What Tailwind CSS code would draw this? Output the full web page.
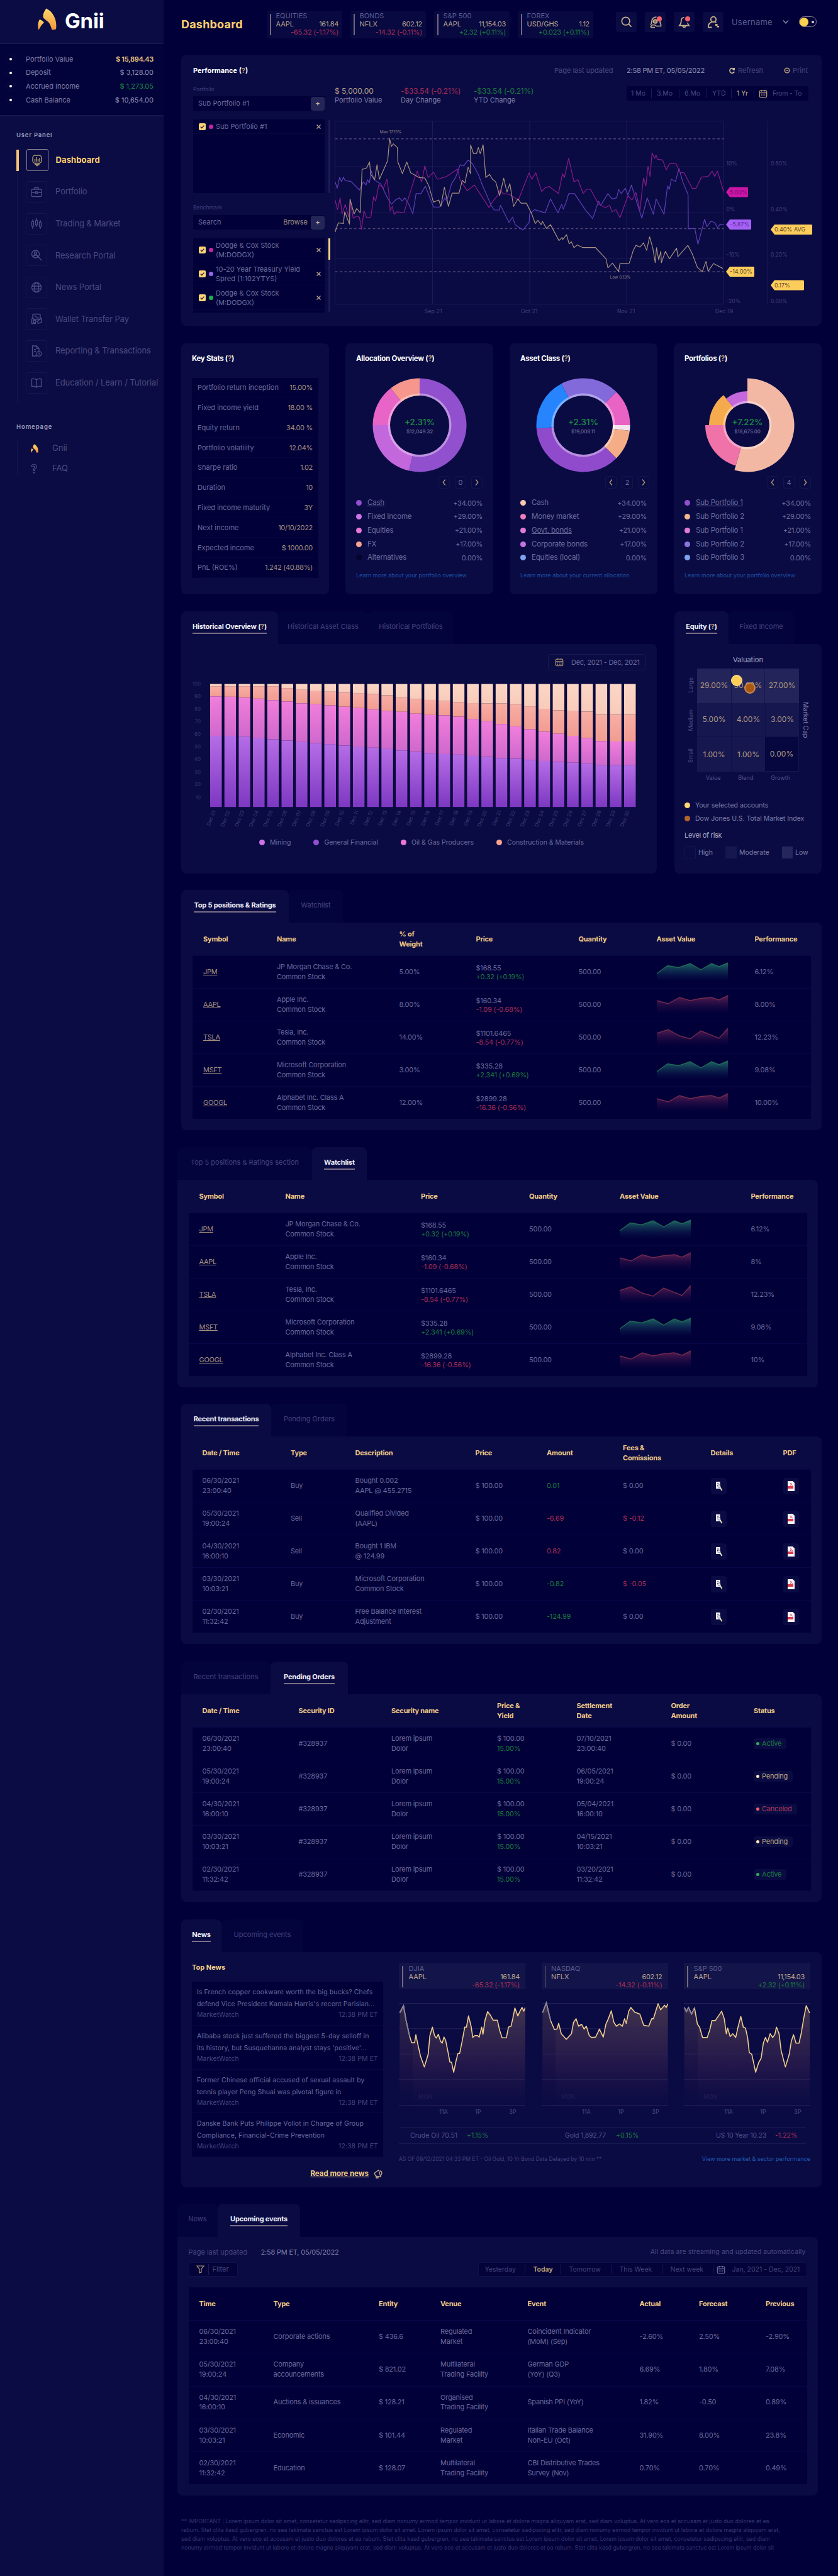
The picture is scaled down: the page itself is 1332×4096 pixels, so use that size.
<!DOCTYPE html>
<html lang="en">
<head>
<meta charset="utf-8">
<title>Gnii Dashboard</title>
<script src="https://cdn.jsdelivr.net/npm/@tailwindcss/browser@4"></script>
</head>
<body class="bg-[#010038] font-[Inter,sans-serif] text-[11px] text-[#7f7fa8]">
<svg class="absolute size-0">
  <defs>
    <linearGradient id="flame" x1="0" y1="0" x2="0" y2="1"><stop offset="0" stop-color="#ffd86b"/><stop offset="1" stop-color="#f0963c"/></linearGradient>
    <linearGradient id="gUp" x1="0" y1="0" x2="0" y2="1"><stop offset="0" stop-color="#1f6a64"/><stop offset="1" stop-color="#0b1a55" stop-opacity="0"/></linearGradient>
    <linearGradient id="gDown" x1="0" y1="0" x2="0" y2="1"><stop offset="0" stop-color="#5c2052"/><stop offset="1" stop-color="#1c0845" stop-opacity="0"/></linearGradient>
    <linearGradient id="gIdx" x1="0" y1="0" x2="0" y2="1"><stop offset="0" stop-color="#46374f" stop-opacity=".95"/><stop offset=".6" stop-color="#27194b" stop-opacity=".85"/><stop offset="1" stop-color="#0e0c45" stop-opacity=".5"/></linearGradient>
  </defs>
  <symbol id="logo" viewBox="0 0 30 34"><path d="M13.500 0C10 5 8 9 8.500 13C9 17 15 19 18 23C20 26 21 29 22.500 34L29 33C31 20 26 6 13.500 0Z" fill="url(#flame)"/><path d="M3 17.500C0 22 0 28 1 34C4 32 4 27 10 22.500C8.500 20 6 18.500 3 17.500Z" fill="url(#flame)"/></symbol>
  <symbol id="cal" viewBox="0 0 16 16"><rect x="1.500" y="2.500" width="13" height="12" rx="2" fill="none" stroke="currentColor" stroke-width="1.500"/><path d="M1.500 6.500h13M5 1v3M11 1v3" stroke="currentColor" stroke-width="1.500"/><path d="M4 9h8M4 11.800h8" stroke="currentColor" stroke-width="1.500" stroke-dasharray="1.600 1.500"/></symbol>
  <symbol id="chevL" viewBox="0 0 8 12"><path d="M5.800 1.500L2.200 6l3.600 4.500" fill="none" stroke="currentColor" stroke-width="1.300"/></symbol>
  <symbol id="chevR" viewBox="0 0 8 12"><path d="M2.200 1.500L5.800 6l-3.600 4.500" fill="none" stroke="currentColor" stroke-width="1.300"/></symbol>
  <symbol id="check" viewBox="0 0 11 11"><rect width="11" height="11" rx="2" fill="#fdd476"/><path d="M2.800 5.600l2 2 3.500-4" fill="none" stroke="#1b1640" stroke-width="1.400"/></symbol>
</svg>
<div class="flex h-[4096px] w-[1332px] overflow-hidden">
  <!-- Sidebar -->
  <aside class="flex w-[260px] shrink-0 flex-col bg-[#0a0c43]">
    <div class="flex h-[70px] items-start border-b-2 border-[#15174f] pl-[60px] pt-[13px]">
      <svg class="h-[35px] w-[30px]"><use href="#logo"/></svg>
      <span class="ml-[13px] mt-[1px] text-[33px] leading-[38px] font-bold tracking-[-0.200px] text-white">Gnii</span>
    </div>
    <div id="balances" class="flex h-[113px] flex-col bg-[#03033b] pt-[13px]"></div>
    <div class="h-[2px] bg-[#16184f]"></div>
    <div class="mt-[23px] pl-[26px] text-[9.500px] leading-[14px] font-semibold tracking-[0.800px] text-[#9b9bbd]">User Panel</div>
    <nav id="nav" class="ml-[27px] mt-[15px] flex flex-col border-l border-[#14164f]"></nav>
    <div class="mt-[30px] pl-[26px] text-[9.500px] leading-[14px] font-semibold tracking-[0.900px] text-[#9b9bbd]">Homepage</div>
    <div class="ml-[27px] mt-[16px] flex h-[54px] flex-col border-l border-[#14164f] text-[13px] text-[#4e4e84]">
      <div class="flex h-[22px] items-center"><svg class="ml-[21px] h-[14px] w-[12px] shrink-0"><use href="#logo"/></svg><span class="ml-[22px]">Gnii</span></div>
      <div class="mt-[10px] flex h-[22px] items-center"><svg class="ml-[20px] h-[16px] w-[12px]" viewBox="0 0 12 16" fill="none" stroke="#4e4e84" stroke-width="1.200"><path d="M2 5a4 4 0 1 1 6 3.500c-1 .7-1 1.500-1 3H5c0-2.500 0-3.500 1.500-4.500A1.600 1.600 0 1 0 4.200 5zM5 13.500h2v1.500H5z"/></svg><span class="ml-[23px]">FAQ</span></div>
    </div>
  </aside>

  <!-- Content -->
  <main class="flex min-w-0 flex-1 flex-col pl-[28px]">
    <header class="flex h-[87px] w-[1018px] shrink-0 items-start">
      <h1 class="mt-[26px] w-[136px] text-[18px] leading-[26px] font-bold tracking-[0.200px] text-[#ffcf70]">Dashboard</h1>
      <div id="tickers" class="mt-[17px] flex gap-[13px]"></div>
      <div class="ml-[36px] mt-[19px] flex gap-[13px] text-[#c9b08c]">
        <div class="flex h-[32px] w-[33px] items-center justify-center rounded bg-[#0a0b42]"><svg class="size-[18px]" viewBox="0 0 20 20" fill="none" stroke="currentColor" stroke-width="1.900"><circle cx="8.500" cy="8.500" r="7"/><path d="M13.500 13.500L18.500 18.500"/></svg></div>
        <div class="relative flex h-[32px] w-[33px] items-center justify-center rounded bg-[#0a0b42]"><svg class="size-[20px]" viewBox="0 0 20 20" fill="none" stroke="currentColor" stroke-width="1.700"><path d="M11.500 2C6.500 2 4 5.500 4 9c0 2.500-.5 4-2 5.500M17 8.500c0 3 .2 4 1.500 5.500v2.500H11"/><circle cx="9.500" cy="9" r="3" fill="#8a7860"/><path d="M2 18.500c1-3 3-4 5-4 2 0 3 .5 4 2M3 18.500h6"/></svg><span class="absolute right-[6px] top-[7px] size-[8px] rounded-full bg-[#f5606e]"></span></div>
        <div class="relative flex h-[32px] w-[33px] items-center justify-center rounded bg-[#0a0b42]"><svg class="size-[19px]" viewBox="0 0 20 20" fill="none" stroke="currentColor" stroke-width="1.800"><path d="M10 2C6.500 2 5 5 5 8c0 3.500-1 5.500-3 7.500h16c-1.500-1.500-2-2.500-2.300-5M7.500 16c.5 3 4.500 3 5 0"/></svg><span class="absolute right-[7px] top-[7px] size-[8px] rounded-full bg-[#f5606e]"></span></div>
        <div class="flex h-[32px] w-[33px] items-center justify-center rounded bg-[#0a0b42]"><svg class="size-[20px]" viewBox="0 0 20 20" fill="none" stroke="currentColor" stroke-width="1.800"><circle cx="10" cy="5.800" r="4.200"/><path d="M7.500 9.800C4 11 1.500 14 2 18.500h5.500M12.500 9.800l2 1"/><path d="M13 13h3.500v3H19v2.500h-3.500V16H13z" fill="currentColor" stroke="none"/></svg></div>
      </div>
      <span class="ml-[13px] mt-[26px] text-[13px] leading-[18px] tracking-[0.200px] text-[#5d5d91]">Username</span>
      <svg class="ml-[16px] mt-[31px] h-[8px] w-[10px] text-[#8a8ab0]" viewBox="0 0 10 8"><path d="M1 1.500l4 4.500 4-4.500" fill="none" stroke="currentColor" stroke-width="1.400"/></svg>
      <div class="ml-[16px] mt-[26px] flex h-[17px] w-[28px] items-center rounded-full border border-[#8d8092]"><span class="size-[14px] rounded-full bg-[#fdd04e]"></span><span class="ml-[5px] size-[4px] rounded-full bg-[#d9d3da]"></span></div>
    </header>

    <!-- Performance -->
    <section class="flex h-[431px] w-[1018px] shrink-0 flex-col rounded-lg bg-[#0a0b43] px-[19px] pt-[16px]">
      <div class="flex h-[18px] items-center">
        <h2 class="w-[574px] font-bold text-white">Performance <span>(<span class="text-[#b39f7c]">?</span>)</span></h2>
        <span class="w-[115px] text-[#4b4b80]">Page last updated</span>
        <span class="w-[162px] tracking-[-0.200px] text-[#8f8fb4]">2:58 PM ET, 05/05/2022</span>
        <svg class="size-[11px] text-[#d8c39b]" viewBox="0 0 12 12"><path d="M9.800 3.500A4.200 4.200 0 1 0 10.200 7.500M10 1v3H7" fill="none" stroke="currentColor" stroke-width="1.700"/></svg>
        <span class="ml-[4px] w-[73px] text-[#46467b]">Refresh</span>
        <svg class="size-[10px] text-[#b39b77]" viewBox="0 0 12 12"><circle cx="6" cy="6" r="4.500" fill="none" stroke="currentColor" stroke-width="2"/><path d="M4 6h4" stroke="currentColor" stroke-width="2"/></svg>
        <span class="ml-[4px] text-[#46467b]">Print</span>
      </div>
      <div class="flex pt-[15px]">
        <div class="flex w-[225px] shrink-0 flex-col">
          <div class="h-[17px] text-[8.500px] leading-[12px] text-[#40407a]">Portfolio</div>
          <div class="flex h-[23px] w-[209px] items-center bg-[#010038] pl-[8px] text-[#6b6b9d]"><span class="flex-1">Sub Portfolio #1</span><span class="flex h-[22px] w-[22px] items-center justify-center rounded-sm bg-[#242658] font-bold text-[#c5b79c]">+</span></div>
          <div class="mt-[14px] flex">
            <div class="h-[117px] w-[209px] bg-[#010038]"><div class="flex h-[23px] items-center border-b border-[#07083f] pl-[9px] text-[#6b6b9d]"><svg class="size-[11px]"><use href="#check"/></svg><span class="ml-[5px] mr-[4px] size-[7px] rounded-full bg-[#c226a8]"></span><span class="w-[160px]">Sub Portfolio #1</span><svg class="size-[7px]" viewBox="0 0 7 7" stroke="#c5b79c" stroke-width="1.100"><path d="M.5.5l6 6M6.500.5l-6 6"/></svg></div></div>
            <span class="ml-[6px] h-[117px] w-[3px] rounded-full bg-[#1b1d57]"></span>
          </div>
          <div class="mt-[17px] h-[18px] text-[8.500px] leading-[12px] text-[#40407a]">Benchmark</div>
          <div class="flex h-[23px] w-[209px] items-center bg-[#010038] pl-[8px] text-[#6b6b9d]"><span class="flex-1">Search</span><span class="mr-[5px] text-[#a38f80]">Browse</span><span class="flex h-[22px] w-[22px] items-center justify-center rounded-sm bg-[#242658] font-bold text-[#c5b79c]">+</span></div>
          <div class="mt-[14px] flex">
            <div id="bench" class="h-[118px] w-[209px] bg-[#010038]"></div>
            <span class="ml-[6px] h-[117px] w-[3px] rounded-full bg-[#1b1d57]"><span class="block h-[34px] w-[3px] bg-[#f6d48a]"></span></span>
          </div>
        </div>
        <div class="flex w-[768px] shrink-0 flex-col">
          <div class="flex h-[50px]">
            <div class="w-[105px] shrink-0 pt-[1px]"><div class="text-[12px] leading-[15px] text-[#b7a48e]">$ 5,000.00</div><div class="leading-[14px]">Portfolio Value</div></div>
            <div class="w-[116px] shrink-0 pt-[1px]"><div class="text-[12px] leading-[15px] tracking-[-0.200px] text-[#a92c55]">-$33.54 (-0.21%)</div><div class="leading-[14px]">Day Change</div></div>
            <div class="w-[243px] shrink-0 pt-[1px]"><div class="text-[12px] leading-[15px] tracking-[-0.200px] text-[#1b7a3e]">-$33.54 (-0.21%)</div><div class="leading-[14px]">YTD Change</div></div>
            <div class="mt-[1px] flex h-[23px] w-[289px] shrink-0 items-center rounded bg-[#010038] text-[10.500px] text-[#4a4a80]">
              <span class="w-[39px] shrink-0 pl-[7px]">1 Mo</span><span class="w-[44px] shrink-0 border-l border-[#191b55] pl-[8px]">3.Mo</span><span class="w-[44px] shrink-0 border-l border-[#191b55] pl-[8px]">6.Mo</span><span class="w-[39px] shrink-0 border-l border-[#191b55] pl-[8px]">YTD</span><span class="w-[36px] shrink-0 border-l border-[#191b55] pl-[8px] text-[#c5b08b]">1 Yr</span><span class="flex items-center whitespace-nowrap border-l border-[#191b55] pl-[7px]"><svg class="size-[14px] text-[#b09b78]"><use href="#cal"/></svg><span class="ml-[8px] tracking-[-0.200px]">From - To</span></span>
            </div>
          </div>
          <svg id="perf" class="h-[320px] w-[768px]" viewBox="532 186 768 320"></svg>
        </div>
      </div>
    </section>

    <!-- Statistic cards -->
    <div class="mt-[28px] flex h-[399px] w-[1018px] shrink-0 gap-[26px]">
      <section class="flex-1 rounded-lg bg-[#0a0b43] px-[17px] pt-[15px]">
        <h2 class="text-[11.500px] leading-[18px] font-bold tracking-[-0.300px] text-white">Key Stats (<span class="text-[#b39f7c]">?</span>)</h2>
        <div id="stats" class="mt-[22px] bg-[#010038] px-[9px]"></div>
      </section>
      <section class="flex-1 rounded-lg bg-[#0a0b43] px-[17px] pt-[15px]" data-donut="0"></section>
      <section class="flex-1 rounded-lg bg-[#0a0b43] px-[17px] pt-[15px]" data-donut="1"></section>
      <section class="flex-1 rounded-lg bg-[#0a0b43] px-[17px] pt-[15px]" data-donut="2"></section>
    </div>

    <!-- History and equity -->
    <div class="mt-[27px] flex h-[417px] w-[1018px] shrink-0 gap-[28px]">
      <section class="flex w-[756px] flex-col">
        <div class="flex h-[52px]" data-tabs="Historical Overview (?)*|154;Historical Asset Class|143;Historical Portfolios|136"></div>
        <div class="flex flex-1 flex-col rounded-lg rounded-tl-none bg-[#0a0b43]">
          <div class="ml-auto mr-[18px] mt-[16px] flex h-[26px] w-[155px] items-center rounded border border-[#181a54] pl-[10px]"><svg class="size-[14px] text-[#a08c6c]"><use href="#cal"/></svg><span class="ml-[12px] whitespace-nowrap tracking-[-0.300px] text-[#6b6b9d]">Dec, 2021 - Dec, 2021</span></div>
          <svg id="hist" class="mt-[10px] h-[256px] w-[740px]" viewBox="288 1076 740 256"></svg>
          <div class="flex justify-center gap-[36px] pl-[8px] text-[10.500px] text-[#6b6b9d]">
            <span class="flex items-center gap-[8px]"><i class="size-[9px] rounded-full bg-[#cb74e6]"></i>Mining</span>
            <span class="flex items-center gap-[8px]"><i class="size-[9px] rounded-full bg-[#9250cf]"></i>General Financial</span>
            <span class="flex items-center gap-[8px]"><i class="size-[9px] rounded-full bg-[#ea77d6]"></i>Oil &amp; Gas Producers</span>
            <span class="flex items-center gap-[8px]"><i class="size-[9px] rounded-full bg-[#f8a392]"></i>Construction &amp; Materials</span>
          </div>
        </div>
      </section>
      <section class="flex w-[234px] flex-col">
        <div class="flex h-[52px]" data-tabs="Equity (?)*|86;Fixed Income|104"></div>
        <div class="flex flex-1 flex-col rounded-lg rounded-tl-none bg-[#0a0b43] px-[16px]">
          <div class="mt-[16px] h-[23px] text-center text-[11px] leading-[18px] text-[#a9a9c6]">Valuation</div>
          <div class="flex h-[164px]">
            <div class="flex w-[20px] flex-col justify-around text-center text-[9px] text-[#4e4e84]"><span class="flex rotate-180 items-center justify-center [writing-mode:vertical-rl]">Large</span><span class="flex rotate-180 items-center justify-center [writing-mode:vertical-rl]">Medium</span><span class="flex rotate-180 items-center justify-center [writing-mode:vertical-rl]">Small</span></div>
            <div class="relative grid h-[164px] w-[162px] grid-cols-3 grid-rows-3 text-[12px] text-[#b09a80]">
              <span class="flex items-center justify-center bg-[#232459]">29.00%</span><span class="flex items-center justify-center border-x border-[#17174d] bg-[#232459]">30.00%</span><span class="flex items-center justify-center bg-[#232459]">27.00%</span>
              <span class="flex items-center justify-center border-b border-[#10114a] bg-[#16174f]">5.00%</span><span class="flex items-center justify-center border-b border-l border-[#10114a] bg-[#16174f]">4.00%</span><span class="flex items-center justify-center border-b border-l border-[#10114a] bg-[#16174f]">3.00%</span>
              <span class="flex items-center justify-center bg-[#16174f]">1.00%</span><span class="flex items-center justify-center border-l border-[#10114a] bg-[#16174f]">1.00%</span><span class="flex items-center justify-center border-r border-b border-[#16174f] bg-[#07073f]">0.00%</span>
              <i class="absolute left-[54px] top-[10px] size-[18px] rounded-full border border-[#fde3a0] bg-[#fdce58]"></i>
              <i class="absolute left-[75px] top-[22px] size-[18px] rounded-full border-2 border-[#c9885a] bg-[#a9590f]"></i>
            </div>
            <div class="flex w-[20px] items-center justify-center text-[10.500px] text-[#8080aa] [writing-mode:vertical-rl]">Market Cap</div>
          </div>
          <div class="ml-[20px] mt-[3px] flex w-[162px] justify-around text-[9px] leading-[13px] text-[#52528a]"><span>Value</span><span>Blend</span><span>Growth</span></div>
          <div class="mt-[27px] flex h-[21px] items-center text-[10.500px]"><i class="mr-[8px] size-[9px] shrink-0 rounded-full bg-[#fdd676]"></i>Your selected accounts</div>
          <div class="flex h-[21px] items-center whitespace-nowrap text-[10.500px]"><i class="mr-[8px] size-[9px] shrink-0 rounded-full bg-[#b0652c]"></i>Dow Jones U.S. Total Market Index</div>
          <div class="mt-[8px] text-[11px] leading-[16px] tracking-[-0.300px] text-[#a9a9c6]">Level of risk</div>
          <div class="mt-[10px] flex items-center text-[10.500px]"><i class="mr-[4px] h-[19px] w-[18px] border border-[#14164f]"></i><span class="w-[43px]">High</span><i class="mr-[4px] h-[19px] w-[18px] bg-[#16174f]"></i><span class="w-[68px]">Moderate</span><i class="mr-[4px] h-[19px] w-[17px] bg-[#25265b]"></i><span>Low</span></div>
        </div>
      </section>
    </div>

    <section class="mt-[26px] h-[382px] w-[1018px] shrink-0" data-table="positions"></section>
    <section class="-ml-[6px] mt-[27px] h-[382px] w-[1018px] shrink-0" data-table="watchlist"></section>
    <section class="mt-[26px] h-[383px] w-[1018px] shrink-0" data-table="recent"></section>
    <section class="mt-[27px] h-[383px] w-[1018px] shrink-0" data-table="pending"></section>

    <!-- News -->
    <section class="mt-[27px] flex h-[426px] w-[1018px] shrink-0 flex-col">
      <div class="flex h-[52px]" data-tabs="News*|64;Upcoming events|130"></div>
      <div class="flex flex-1 rounded-lg rounded-tl-none bg-[#0a0b43] pl-[17px]">
        <div class="flex w-[304px] shrink-0 flex-col">
          <h3 class="mt-[15px] h-[32px] text-[11px] leading-[18px] font-bold text-[#f4cd86]">Top News</h3>
          <div id="news" class="h-[279px] bg-[#010038]"></div>
          <div class="mt-[18px] flex items-center justify-end"><span class="text-[11.500px] font-bold text-[#f4cd86] underline">Read more news</span><svg class="ml-[7px] h-[15px] w-[16px] text-[#c9b08c]" viewBox="0 0 16 15" fill="none" stroke="currentColor" stroke-width="1.300"><path d="M2 6.500l7-5 3 11-8-1.500zM5 11v3h3v-2.500M11 3c3 0 4 5 1.500 7"/></svg></div>
        </div>
        <div class="ml-[25px] flex w-[654px] shrink-0 flex-col">
          <div id="indices" class="mt-[17px] flex justify-between"></div>
          <div class="mt-[14px] flex h-[27px] w-[647px] items-center border-y border-[#171953] text-[10.500px] text-[#52528a]"><span class="ml-[18px] w-[90px]">Crude Oil 70.51</span><span class="w-[156px] text-[#1b7a3e]">+1.15%</span><span class="w-[81px] tracking-[-0.200px]">Gold 1,892.77</span><span class="w-[159px] text-[#1b7a3e]">+0.15%</span><span class="w-[94px] tracking-[-0.200px]">US 10 Year 10.23</span><span class="text-[#a92c55]">-1.22%</span></div>
          <div class="mt-[17px] flex justify-between text-[8.500px] leading-[14px]"><span class="text-[#40407a]">AS OF 09/12/2021 04:33 PM ET - Oil Gold, 10 Yr Bond Data Delayed by 10 min **</span><span class="text-[9px] text-[#1f5cb8]">View more market &amp; sector performance</span></div>
        </div>
      </div>
    </section>

    <!-- Upcoming events -->
    <section class="-ml-[6px] mt-[26px] h-[464px] w-[1018px] shrink-0">
      <div class="flex h-[53px]" data-tabs="News|64;Upcoming events*|131"></div>
      <div class="h-[411px] rounded-lg rounded-tl-none bg-[#0a0b43] px-[17.500px]">
        <div class="flex h-[40px] items-center pt-[8px]"><span class="w-[115px] text-[#45457c]">Page last updated</span><span class="tracking-[-0.200px] text-[#7f7fa8]">2:58 PM ET, 05/05/2022</span><span class="ml-auto mr-[2px] text-[10.500px] tracking-[0.100px] text-[#4a4a80]">All data are streaming and updated automatically</span></div>
        <div class="flex h-[40px] items-start justify-between text-[#45457c]">
          <div class="flex h-[23px] w-[78px] items-center rounded border border-[#10114a] bg-[#030339] pl-[11px]"><svg class="h-[13px] w-[13px] text-[#b39b77]" viewBox="0 0 13 13"><path d="M1 1h11L8 6v5l-3 1V6z" fill="none" stroke="currentColor" stroke-width="1.200"/></svg><span class="ml-[6px] border-l border-[#191b55] pl-[6px]">Filter</span></div>
          <div class="flex h-[23px] w-[523px] items-center rounded border border-[#10114a] bg-[#030339] text-[10.500px]"><span class="w-[73px] pl-[10px]">Yesterday</span><span class="w-[57px] border-l border-[#191b55] pl-[13px] font-semibold text-[#c5a878]">Today</span><span class="w-[80px] border-l border-[#191b55] pl-[13px]">Tomorrow</span><span class="w-[81px] border-l border-[#191b55] pl-[13px]">This Week</span><span class="w-[81px] border-l border-[#191b55] pl-[13px]">Next week</span><span class="flex items-center whitespace-nowrap border-l border-[#191b55] pl-[5px]"><svg class="size-[14px] text-[#67679a]"><use href="#cal"/></svg><span class="ml-[11px]">Jan, 2021 - Dec, 2021</span></span></div>
        </div>
        <div id="events" class="bg-[#010038]"></div>
      </div>
    </section>

    <p class="mt-[34px] w-[1018px] text-[8.800px] leading-[14px] whitespace-nowrap text-[#36366f]">** IMPORTANT : Lorem ipsum dolor sit amet, consetetur sadipscing elitr, sed diam nonumy eirmod tempor invidunt ut labore et dolore magna aliquyam erat, sed diam voluptua. At vero eos et accusam et justo duo dolores et ea<br>rebum. Stet clita kasd gubergren, no sea takimata sanctus est Lorem ipsum dolor sit amet. Lorem ipsum dolor sit amet, consetetur sadipscing elitr, sed diam nonumy eirmod tempor invidunt ut labore et dolore magna aliquyam erat,<br>sed diam voluptua. At vero eos et accusam et justo duo dolores et ea rebum. Stet clita kasd gubergren, no sea takimata sanctus est Lorem ipsum dolor sit amet. Lorem ipsum dolor sit amet, consetetur sadipscing elitr, sed diam<br>nonumy eirmod tempor invidunt ut labore et dolore magna aliquyam erat, sed diam voluptua. At vero eos et accusam et justo duo dolores et ea rebum. Stet clita kasd gubergren, no sea takimata sanctus est Lorem ipsum dolor sit</p>
  </main>
</div>

<script>
const $ = s => document.querySelector(s);
const RED = 'text-[#a92c55]', GREEN = 'text-[#1b7a3e]';

// Sidebar balances
$('#balances').innerHTML = [
  ['Portfolio Value','$ 15,894.43','font-semibold tracking-[-0.300px] text-[#e5c07e]'],
  ['Deposit','$ 3,128.00','text-[#8f8fb4]'],
  ['Accrued Income','$ 1,273.05','text-[#1b8a3e]'],
  ['Cash Balance','$ 10,654.00','text-[#8f8fb4]'],
].map(([l,v,c]) => `<div class="flex h-[21.700px] items-center pr-[16px] pl-[10px]"><span class="flex size-[14px] items-center justify-center rounded-full border border-[#0a0b42]"><i class="size-[4px] rounded-full bg-white"></i></span><span class="ml-[17px] flex-1">${l}</span><span class="${c}">${v}</span></div>`).join('');

// Sidebar navigation
const navIcons = [
  '<rect x="3" y="2" width="14" height="12.500" rx="4"/><path d="M6.500 12V8M9 12V5M11.500 12V8M14 12V6M7 14.500v2h6v-2M8 18.500h4"/>',
  '<rect x="2" y="6" width="16" height="11.500" rx="1.500"/><path d="M7 6V3.500h6V6M2 11h6M12 11h6M8.500 9.800h3v2.500h-3z"/>',
  '<path d="M4 3v3M4 14v4M10 1v3M10 12v3M16 4v3M16 15v3"/><rect x="2.500" y="6" width="3" height="8" rx="1"/><rect x="8.500" y="4" width="3" height="8" rx="1"/><rect x="14.500" y="7" width="3" height="8" rx="1"/>',
  '<circle cx="8.500" cy="8" r="6"/><circle cx="8.500" cy="6.500" r="2"/><path d="M5 12c.5-3 6.500-3 7 0M13 12.500l5 5.500"/>',
  '<circle cx="10" cy="10" r="7.500"/><ellipse cx="10" cy="10" rx="3.500" ry="7.500"/><path d="M2.500 8h15M2.500 12.500h15"/>',
  '<rect x="4" y="2.500" width="12" height="8" rx="1"/><path d="M2 8l4 3M6 5l8 4M2.500 10v7.500H9M18 9l-7 5 2 3.500 5-2.500z"/><circle cx="7" cy="14" r="2"/>',
  '<path d="M11 18H3.500V2H10l4 4v4M10 2v4h4M6 8h3M6 11h3"/><circle cx="14" cy="14.500" r="3.800"/><path d="M14 12.500v2.300h1.500"/>',
  '<path d="M10 5C8 3 5 3 2.500 3.500v12C5 15 8 15 10 17c2-2 5-2 7.500-1.500v-12C15 3 12 3 10 5zv12"/>'];
$('#nav').innerHTML = ['Dashboard','Portfolio','Trading &amp; Market','Research Portal','News Portal','Wallet Transfer Pay','Reporting &amp; Transactions','Education / Learn / Tutorial']
  .map((t,i) => i === 0
    ? `<div class="-ml-[2px] mb-[15.600px] flex h-[35px] items-center"><i class="h-[34px] w-[3.500px] bg-[#f3c274]"></i><span class="ml-[12px] flex h-[35px] w-[35px] items-center justify-center rounded-[3px] border-[1.500px] border-[#8f8794]"><svg class="size-[20px]" viewBox="0 0 20 20" fill="none" stroke="#a8946f" stroke-width="1.500">${navIcons[0]}</svg></span><span class="ml-[12px] text-[13px] font-bold tracking-[0.100px] text-[#ffcf70]">${t}</span></div>`
    : `<div class="mb-[15.600px] ml-[13px] flex h-[35px] items-center"><span class="flex h-[34px] w-[34px] shrink-0 items-center justify-center rounded-[3px] border border-[#14164f]"><svg class="size-[20px]" viewBox="0 0 20 20" fill="none" stroke="#4e4e84" stroke-width="1.300">${navIcons[i]}</svg></span><span class="ml-[13px] whitespace-nowrap text-[13px] tracking-[-0.100px] text-[#4a4a80]">${t}</span></div>`).join('');

// Quote cards
const quote = (a,b,c,d,up) => `<div class="flex-1"><div class="leading-[13px] text-[#5d5d91]">${a}</div><div class="flex justify-between leading-[13px] text-[#b7a48e]"><span>${b}</span><span class="tracking-[-0.300px]">${c}</span></div><div class="text-right leading-[13px] tracking-[-0.200px] ${up ? GREEN : RED}">${d}</div></div>`;
$('#tickers').innerHTML = [
  ['EQUITIES','AAPL','161.84','-65.32 (-1.17%)',0],['BONDS','NFLX','602.12','-14.32 (-0.11%)',0],
  ['S&amp;P 500','AAPL','11,154.03','+2.32 (+0.11%)',1],['FOREX','USD/GHS','1.12','+0.023 (+0.11%)',1],
].map(q => `<div class="flex h-[44px] w-[120px] rounded bg-[#080941] pt-[2px] pr-[6px] pl-[5px]"><i class="mt-[3px] mr-[8px] h-[34px] w-[1.500px] bg-[#75697d]"></i>${quote(...q)}</div>`).join('');

// Benchmarks
$('#bench').innerHTML = [['Dodge &amp; Cox Stock','(M:DODGX)','bg-[#c226a8]'],['10-20 Year Treasury Yield','Spred (1:102YTYS)','bg-[#9a63f0]'],['Dodge &amp; Cox Stock','(M:DODGX)','bg-[#22b04e]']]
  .map(([a,b,c]) => `<div class="flex h-[38px] items-center border-b border-[#07083f] pl-[9px] text-[#6b6b9d]"><svg class="size-[11px]"><use href="#check"/></svg><span class="ml-[5px] mr-[4px] size-[7px] rounded-full ${c}"></span><span class="w-[160px] leading-[14.500px]">${a}<br>${b}</span><svg class="size-[7px]" viewBox="0 0 7 7" stroke="#c5b79c" stroke-width="1.100"><path d="M.5.5l6 6M6.500.5l-6 6"/></svg></div>`).join('');

// Performance chart
(() => {
  const gold = "1254,1085 1266,1042 1285,1045 1290,990 1308,1048 1310,930 1325,1000 1335,975 1348,995 1355,792 1372,785 1383,757 1387,815 1402,840 1411,770 1420,838 1451,750 1458,648 1465,685 1472,672 1487,690 1489,757 1506,812 1522,757 1537,808 1568,830 1590,832 1605,870 1622,945 1642,935 1650,965 1663,875 1678,965 1692,903 1718,903 1730,843 1740,855 1752,782 1761,812 1761,677 1772,718 1783,718 1790,690 1797,718 1808,677 1818,830 1832,815 1843,838 1855,850 1870,915 1885,833 1897,898 1908,858 1922,965 1938,930 1950,950 1970,950 1990,1000 2003,1045 2013,1030 2025,1050 2030,1035 2045,1068 2060,1050 2092,1125 2103,1110 2106,1120 2120,1097 2130,1140 2138,1130 2148,1158 2160,1145 2180,1157 2228,1157 2268,1210 2275,1252 2292,1230 2315,1270 2320,1232 2355,1230 2370,1170 2380,1147 2395,1155 2408,1135 2420,1170 2431,1107 2443,1160 2452,1228 2457,1158 2465,1215 2473,1175 2475,1228 2490,1175 2505,1210 2532,1160 2537,1200 2574,1147 2590,1185 2610,1250 2628,1270 2642,1222 2650,1268 2670,1232 2705,1255";
  const pink = "1254,935 1263,980 1273,925 1280,1000 1292,955 1305,1015 1310,935 1322,1020 1335,1010 1345,1015 1353,1072 1362,985 1372,1018 1388,1015 1398,920 1406,940 1418,862 1435,880 1448,838 1455,900 1460,985 1468,965 1475,1002 1485,990 1512,995 1525,940 1540,880 1552,830 1562,800 1568,822 1578,850 1590,775 1602,830 1622,805 1637,838 1672,825 1712,790 1722,840 1748,892 1775,865 1830,970 1845,940 1862,915 1872,885 1882,905 1905,908 1940,935 1980,808 1990,838 2005,808 2027,895 2040,878 2055,872 2090,905 2105,812 2112,830 2128,740 2148,850 2163,840 2182,905 2195,885 2210,885 2240,955 2265,970 2282,960 2290,990 2305,980 2320,1018 2350,915 2365,935 2380,900 2395,983 2408,832 2417,870 2425,778 2433,825 2440,715 2450,740 2455,725 2462,745 2480,748 2493,795 2505,765 2530,765 2545,805 2560,808 2590,880 2605,880 2625,828 2650,825 2665,800 2675,825 2685,800 2708,895";
  const violet = "1254,850 1262,880 1271,828 1278,850 1285,828 1292,845 1313,848 1345,888 1360,850 1370,865 1375,840 1382,855 1390,800 1400,840 1425,860 1450,925 1465,955 1480,935 1495,925 1505,940 1515,925 1530,955 1545,1000 1557,905 1575,905 1592,870 1622,968 1645,968 1665,925 1672,940 1690,858 1705,830 1722,770 1735,775 1752,748 1768,765 1790,815 1805,865 1840,965 1850,982 1868,982 1873,960 1905,1040 1918,1015 1928,1050 1957,1075 1980,1040 1982,1000 2000,980 2040,995 2060,930 2088,995 2102,955 2108,978 2120,940 2128,905 2150,905 2190,980 2218,1022 2240,940 2248,960 2275,905 2290,930 2308,925 2315,885 2325,905 2340,880 2350,912 2363,865 2402,1020 2422,925 2445,1002 2455,930 2485,1002 2498,870 2505,885 2512,838 2528,848 2541,788 2555,850 2575,910 2576,1070 2600,1068 2612,1142 2637,1025 2645,1060 2660,1035 2675,1040 2685,1065 2695,1048 2708,1050";
  let s = '';
  for (const y of [192.5,265,338.5,411,483.5]) s += `<path d="M532.500 ${y}H1150.500" stroke="#1d1a5c"/>`;
  for (const x of [532.5,687.5,842,996,1150.5,1220.5]) s += `<path d="M${x} 192V484" stroke="#1d1a5c"/>`;
  for (const y of [220.7,363.6,432]) s += `<path d="M532.500 ${y}H1150.500" stroke="#4e4473" stroke-width="1.500" stroke-dasharray="4 3.500"/>`;
  s += '<g transform="scale(.42474 .34013)" fill="none" stroke-width="1.200" stroke-linejoin="round">';
  for (const [p,c] of [[violet,'#5f3fb8'],[pink,'#8b1a8c'],[gold,'#a8917f']]) s += `<polyline points="${p}" stroke="${c}" vector-effect="non-scaling-stroke"/>`;
  s += '</g>';
  const t = (x,y,v,f='#3f3f78',a='start',z=8.5) => `<text x="${x}" y="${y}" fill="${f}" font-size="${z}" text-anchor="${a}">${v}</text>`;
  [['10%','0.60%',263],['0%','0.40%',335.5],['-10%','0.20%',408],['-20%','0.00%',481.5]].forEach(([a,b,y]) => s += t(1154.5,y,a) + t(1225,y,b));
  [['Sep 21',688.5],['Oct 21',841],['Nov 21',995],['Dec 19',1151]].forEach(([a,x]) => s += t(x,498,a,'#3f3f78','middle',9));
  s += t(621,212,'Max 17.15%','#8f7f86','middle',6.5) + t(986,443,'Low 0.13%','#8f7f86','middle',6.5);
  [[1154,297.5,35,'#cb15a5','5.00%','#7a0b78'],[1154,349,40,'#a562f5','-5.87%','#5c2ba6'],[1154,424,45,'#fdcd5c','-14.00%','#5b4526'],[1225,357,66,'#fdcd5c','0.40% AVG','#5b4526'],[1225,445.5,53,'#fdcd5c','0.17%','#5b4526']]
    .forEach(([x,y,w,c,v,f]) => s += `<path d="M${x} ${y+8}L${x+6} ${y}H${x+w-1.5}q1.500 0 1.500 1.500V${y+14.5}q0 1.500-1.500 1.500H${x+6}Z" fill="${c}"/>` + t(x+6,y+11.2,v,f,'start',9));
  $('#perf').innerHTML = s;
})();

// Key stats
$('#stats').innerHTML = [['Portfolio return inception','15.00%'],['Fixed income yield','18.00 %'],['Equity return','34.00 %'],['Portfolio volatility','12.04%'],['Sharpe ratio','1.02'],['Duration','10'],['Fixed income maturity','3Y'],['Next income','10/10/2022'],['Expected income','$ 1000.00'],['PnL (ROE%)','1.242 (40.88%)']]
  .map(([a,b]) => `<div class="flex h-[31.800px] items-center justify-between border-b border-[#06063f] text-[11px] whitespace-nowrap"><span class="text-[#6b6b9d]">${a}</span><span class="tracking-[-0.300px] text-[#a38f80]">${b}</span></div>`).join('');

// Donut cards
const pt = (r,a) => { const k = (a-90)*Math.PI/180; return `${(75+r*Math.cos(k)).toFixed(2)} ${(75+r*Math.sin(k)).toFixed(2)}`; };
const arc = (r0,r1,a,b,c,o=1) => `<path d="M${pt(r1,a)}A${r1} ${r1} 0 ${b-a>180?1:0} 1 ${pt(r1,b)}L${pt(r0,b)}A${r0} ${r0} 0 ${b-a>180?1:0} 0 ${pt(r0,a)}Z" fill="${c}" fill-opacity="${o}"/>`;
[
  { title:'Allocation Overview', pct:'+2.31%', sum:'$12,049.32', page:0, link:'Learn more about your portfolio overview', hole:47, pos:'ml-[26px]', pager:'pr-0',
    seg:[[0,193,'#9150cd'],[193,270,'#c267dc'],[270,322,'#e864c6'],[322,360,'#f6968c']],
    rows:[['Cash','+34.00%','bg-[#9250cf]',1],['Fixed Income','+29.00%','bg-[#cb74e6]'],['Equities','+21.00%','bg-[#ea77d6]'],['FX','+17.00%','bg-[#f8a392]'],['Alternatives','0.00%','bg-[#04042c]']] },
  { title:'Asset Class', pct:'+2.31%', sum:'$19,008.11', page:2, link:'Learn more about your current allocation', hole:47, pos:'ml-[25px]', pager:'-mr-[4px]',
    seg:[[-28,45,'#836adb'],[45,90,'#e963c5'],[90,97,'#f3e6ee'],[97,135,'#f4ad86'],[135,266,'#8f4bcb'],[266,332,'#2684ff']],
    rows:[['Cash','+34.00%','bg-[#f8c8b0]'],['Money market','+29.00%','bg-[#ee7fb8]'],['Govt. bonds','+21.00%','bg-[#e07cd6]',1],['Corporate bonds','+17.00%','bg-[#c473e0]'],['Equities (local)','0.00%','bg-[#7ea2ee]']] },
  { title:'Portfolios', pct:'+7.22%', sum:'$18,675.00', page:4, link:'Learn more about your portfolio overview', hole:35, pos:'ml-[25px]', pager:'pr-0',
    seg:[[0,196,'#f2b8a4',74.5],[196,270,'#ef72a9',67],[270,321.500,'#f5ab4d',61],[321.500,360,'#c568dc',54]],
    rows:[['Sub Portfolio 1','+34.00%','bg-[#9250cf]',1],['Sub Portfolio 2','+29.00%','bg-[#f3b692]'],['Sub Portfolio 1','+21.00%','bg-[#e07cd6]'],['Sub Portfolio 2','+17.00%','bg-[#8a74e0]'],['Sub Portfolio 3','0.00%','bg-[#7ea2ee]']] },
].forEach((d,i) => {
  const box = 'flex h-[20px] w-[18px] items-center justify-center rounded-[4px] border border-[#13154e]';
  document.querySelector(`[data-donut="${i}"]`).innerHTML = `
    <h2 class="text-[11.500px] leading-[18px] font-bold tracking-[-0.300px] text-white">${d.title} (<span class="text-[#b39f7c]">?</span>)</h2>
    <svg class="mt-[22px] size-[150px] ${d.pos}" viewBox="0 0 150 150">
      ${d.seg.map(s => arc(d.hole, s[3]||74.5, s[0], s[1], s[2])).join('')}
      ${d.seg.map(s => arc(d.hole, d.hole+3.500, s[0], s[1], '#ffffff', .38)).join('')}
      <text x="75" y="75" text-anchor="middle" font-size="13.500" font-weight="500" fill="#1c8f42">${d.pct}</text>
      <text x="75" y="88" text-anchor="middle" font-size="8" fill="#7f7fa8">${d.sum}</text>
    </svg>
    <div class="mt-[6px] flex justify-end gap-[8px] text-[#b39b77] ${d.pager}"><span class="${box}"><svg class="h-[12px] w-[8px]"><use href="#chevL"/></svg></span><span class="${box} text-[#6b6b9d]">${d.page}</span><span class="${box}"><svg class="h-[12px] w-[8px]"><use href="#chevR"/></svg></span></div>
    <div class="mt-[12px]">${d.rows.map(([a,b,c,u]) => `<div class="flex h-[21.750px] items-center text-[11.500px] tracking-[-0.200px] text-[#6b6b9d]"><i class="mr-[9px] size-[9px] rounded-full ${c}"></i><span class="flex-1"><span class="${u ? 'underline' : ''}">${a}</span></span><span class="text-[11px]">${b}</span></div>`).join('')}</div>
    <div class="mt-[10px] text-[9px] leading-[14px] whitespace-nowrap text-[#1d4fa5]">${d.link}</div>`;
});

// Tab strips: an open tab shares the card colour and is underlined
const tab = (label,w,on) => on
  ? `<div class="flex h-full items-start justify-center rounded-t-lg bg-[#0a0b43] pt-[17px]" style="width:${w}px"><span class="border-b-[2.500px] border-[#7d6e88] pb-[2px] text-[11px] leading-[15px] font-bold tracking-[-0.200px] whitespace-nowrap text-[#eeeef8]">${label}</span></div>`
  : `<div class="flex h-full items-start justify-center rounded-t-lg bg-[#04043d] pt-[17px]" style="width:${w}px"><span class="text-[11px] leading-[15px] whitespace-nowrap text-[#43437b]">${label}</span></div>`;
document.querySelectorAll('[data-tabs]').forEach(el => {
  el.innerHTML = el.dataset.tabs.split(';').map(p => {
    const [raw,w] = p.split('|');
    return tab(raw.replace('*','').replace('(?)','(<span class="text-[#b39f7c]">?</span>)'), w, raw.endsWith('*'));
  }).join('');
});

// Stacked history bars
(() => {
  const Y = v => 949.6 + v*.29865;
  const a=[738,738,742,748,756,763,771,777,782,790,798,801,808,816,823,831,835,838,845,850,856,860,866,872,877,881,886,893,893,893];
  const b=[528,530,535,540,548,555,565,570,576,583,590,598,605,610,620,627,629,636,648,660,675,688,703,716,727,738,750,766,768,768];
  const c=[474,474,474,474,474,484,493,500,503,508,513,515,522,533,541,547,553,558,564,566,566,571,581,594,602,607,609,626,626,626];
  let s = `<defs>${[['h1','#b56ce6','#7d38c2'],['h2','#f07edb','#d068cd'],['h3','#f8aea4','#f29c92'],['h4','#fbd6c6','#f9cbb9']].map(([i,p,q]) => `<linearGradient id="${i}" x1="0" y1="0" x2="0" y2="1"><stop offset="0" stop-color="${p}"/><stop offset="1" stop-color="${q}"/></linearGradient>`).join('')}</defs>`;
  for (let i=0;i<30;i++) {
    const x = 334 + i*22.69, r = (t,u,f) => `<rect x="${x.toFixed(2)}" y="${Y(t).toFixed(2)}" width="18.500" height="${(Y(u)-Y(t)).toFixed(2)}" fill="url(#${f})"/>`;
    s += `<rect x="${(x-1).toFixed(2)}" y="${Y(462)}" width="20.500" height="${Y(1117)-Y(462)}" fill="#050530"/>`;
    s += r(462,c[i],'h4') + r(c[i],b[i],'h3') + r(b[i],a[i],'h2') + r(a[i],1117,'h1');
    s += `<text transform="translate(${(x+9).toFixed(1)} 1290) rotate(-68)" text-anchor="end" font-size="8" fill="#3d3d76">Dec ${String(i+1).padStart(2,'0')}</text>`;
  }
  for (let k=1;k<=10;k++) s += `<text x="319" y="${(1290.500 - k*20.050).toFixed(1)}" text-anchor="end" font-size="8" fill="#34346e">${k*10}</text>`;
  $('#hist').innerHTML = s;
})();

// Data tables
const spark = k => {
  const p = { a:'0,17 17,4.500 35,7.500 53,1 70,11 87,1 99,6 113,0', b:'0,8 18,13 36,3 53,8 70,4.500 87,3 99,7 113,0', c:'0,8 18,2 36,12 53,17 70,4 99,16 113,0' }[k], up = k === 'a';
  return `<svg class="h-[31px] w-[113px]" viewBox="0 -1 113 31"><polygon points="${p} 113,30 0,30" fill="url(#${up?'gUp':'gDown'})"/><polyline points="${p}" fill="none" stroke="${up?'#1f6a55':'#74294f'}" stroke-width="1.400"/></svg>`;
};
const box = 'flex h-[26px] w-[25px] items-center justify-center rounded bg-[#0a0b42]';
const details = `<span class="${box}"><svg class="h-[16px] w-[13px]" viewBox="0 0 13 16"><path d="M2 1h6.500v5L10 12H2z" fill="#f3f3fa"/><path d="M4 4h2.500M4 6.500h2" stroke="#22224f"/><circle cx="7" cy="8" r="2.200" fill="#f3f3fa" stroke="#55557c" stroke-width=".8"/><path d="M8.500 10l3 5" stroke="#f3e6c8" stroke-width="1.800"/></svg></span>`;
const pdf = `<span class="${box}"><svg class="h-[16px] w-[13px]" viewBox="0 0 13 16"><path d="M1 0h8l3 3v13H1z" fill="#f7f7fb"/><path d="M1 8h9v4H1z" fill="#e03b4c"/><path d="M5 7c2-1 2-4 1-4s0 3 3 4" stroke="#e03b4c" fill="none"/></svg></span>`;
const status = k => { const [c,d] = { Active:[GREEN,'bg-[#2fae52]'], Pending:['text-[#b7a080]','bg-[#fde9b8]'], Canceled:['text-[#b53a5c]','bg-[#f0606e]'] }[k]; return `<span class="inline-flex h-[17px] items-center rounded-sm bg-[#0a0b42] pr-[8px] pl-[4px] ${c}"><i class="mr-[4px] size-[5px] rounded-full ${d}"></i>${k}</span>`; };
const col = (c,v) => `<span class="${c}">${v}</span>`;
const sym = v => `<span class="tracking-[-0.300px] text-[#a38f80] underline">${v}</span>`;
const price = (a,b,up) => `<span class="block leading-[14px]">${a}<br>${col(up?GREEN:RED,b)}</span>`;
const rowsHtml = (grid,head,rows,rowH) => `<div class="grid h-[52px] items-center ${grid}">${head.map(h => `<span class="text-[11px] leading-[16px] font-bold tracking-[-0.200px] text-[#f0ca88]">${h}</span>`).join('')}</div>
  <div class="bg-[#010038]">${rows.map(r => `<div class="grid items-center border-t border-[#070748] leading-[15.700px] tracking-[-0.200px] text-[#69699c] ${rowH} ${grid}">${r.map(v => `<span>${v}</span>`).join('')}</div>`).join('')}</div>`;
const companies = [['JPM','JP Morgan Chase &amp; Co.','$168.55','+0.32 (+0.19%)',1,'a'],['AAPL','Apple Inc.','$160.34','-1.09 (-0.68%)',0,'b'],['TSLA','Tesla, Inc.','$1101.6465','-8.54 (-0.77%)',0,'c'],['MSFT','Microsoft Corporation','$335.28','+2.341 (+0.69%)',1,'a'],['GOOGL','Alphabet Inc. Class A','$2899.28','-16.36 (-0.56%)',0,'b']];
const dates = ['06/30/2021<br>23:00:40','05/30/2021<br>19:00:24','04/30/2021<br>16:00:10','03/30/2021<br>10:03:21','02/30/2021<br>11:32:42'];
const tables = {
  positions: { t:[['Top 5 positions &amp; Ratings',171,1],['Watchlist',86,0]],
    grid:'grid-cols-[117px_194.500px_122px_163px_124px_156px_1fr] pl-[17.500px]', head:['Symbol','Name','% of<br>Weight','Price','Quantity','Asset Value','Performance'],
    rows: companies.map((c,i) => [sym(c[0]), c[1]+'<br>Common Stock', ['5.00%','8.00%','14.00%','3.00%','12.00%'][i], price(c[2],c[3],c[4]), '500.00', spark(c[5]), ['6.12%','8.00%','12.23%','9.08%','10.00%'][i]]) },
  watchlist: { t:[['Top 5 positions &amp; Ratings section',214,0],['Watchlist',87,1]],
    grid:'grid-cols-[137px_215.500px_172px_144px_208.500px_1fr] pl-[17px]', head:['Symbol','Name','Price','Quantity','Asset Value','Performance'],
    rows: companies.map((c,i) => [sym(c[0]), c[1]+'<br>Common Stock', price(c[2],c[3],c[4]), '500.00', spark(c[5]), ['6.12%','8%','12.23%','9.08%','10%'][i]]) },
  recent: { t:[['Recent transactions',143,1],['Pending Orders',121,0]],
    grid:'grid-cols-[140.500px_102.500px_191px_113.500px_121px_139.500px_115px_1fr] pl-[16px]', head:['Date / Time','Type','Description','Price','Amount','Fees &amp;<br>Comissions','Details','PDF'],
    rows: [['Buy','Bought 0.002<br>AAPL @ 455.2715',GREEN,'0.01','','$ 0.00'],['Sell','Qualified Divided<br>(AAPL)',RED,'-6.69',RED,'$ -0.12'],['Sell','Bought 1 IBM<br>@ 124.99',RED,'0.82','','$ 0.00'],['Buy','Microsoft Corporation<br>Common Stock',GREEN,'-0.82',RED,'$ -0.05'],['Buy','Free Balance Interest<br>Adjustment',GREEN,'-124.99','','$ 0.00']]
      .map((r,i) => [dates[i], r[0], r[1], '$ 100.00', col(r[2],r[3]), col(r[4],r[5]), details, pdf]) },
  pending: { t:[['Recent transactions',142,0],['Pending Orders',123,1]],
    grid:'grid-cols-[153px_147.500px_168px_126.500px_150px_131.500px_1fr] pl-[16px]', head:['Date / Time','Security ID','Security name','Price &amp;<br>Yield','Settlement<br>Date','Order<br>Amount','Status'],
    rows: [['07/10/2021<br>23:00:40','Active'],['06/05/2021<br>19:00:24','Pending'],['05/04/2021<br>16:00:10','Canceled'],['04/15/2021<br>10:03:21','Pending'],['03/20/2021<br>11:32:42','Active']]
      .map((r,i) => [dates[i], '#328937', 'Lorem ipsum<br>Dolor', '$ 100.00<br>'+col(GREEN,'15.00%'), r[0], '$ 0.00', status(r[1])]) },
};
for (const [k,t] of Object.entries(tables))
  document.querySelector(`[data-table="${k}"]`).innerHTML = `<div class="flex h-[52px]">${t.t.map(x => tab(...x)).join('')}</div><div class="h-[330px] rounded-lg rounded-tl-none bg-[#0a0b43] px-[17.500px]">${rowsHtml(t.grid,t.head,t.rows,'h-[52px]')}</div>`;
$('#events').innerHTML = rowsHtml('grid-cols-[118px_167.500px_98px_138.500px_178px_94.500px_106px_1fr] pl-[17px]', ['Time','Type','Entity','Venue','Event','Actual','Forecast','Previous'], [
  ['Corporate actions','$ 436.6','Regulated<br>Market','Coincident Indicator<br>(MoM) (Sep)','-2.60%','2.50%','-2.90%'],
  ['Company<br>accouncements','$ 821.02','Multilateral<br>Trading Facility','German GDP<br>(YoY) (Q3)','6.69%','1.80%','7.08%'],
  ['Auctions &amp; issuances','$ 128.21','Organised<br>Trading Facility','Spanish PPI (YoY)','1.82%','-0.50','0.89%'],
  ['Economic','$ 101.44','Regulated<br>Market','Italian Trade Balance<br>Non-EU (Oct)','31.90%','8.00%','23.8%'],
  ['Education','$ 128.07','Multilateral<br>Trading Facility','CBI Distributive Trades<br>Survey (Nov)','0.70%','0.70%','0.49%'],
].map((r,i) => [dates[i], ...r]), 'h-[52.300px]');

// News list
$('#news').innerHTML = [['Is French copper cookware worth the big bucks? Chefs','defend Vice President Kamala Harris\'s recent Parisian...'],['Alibaba stock just suffered the biggest 5-day selloff in','its history, but Susquehanna analyst stays \'positive\'...'],['Former Chinese official accused of sexual assault by','tennis player Peng Shuai was pivotal figure in'],['Danske Bank Puts Philippe Vollot in Charge of Group','Compliance, Financial-Crime Prevention']]
  .map(([a,b]) => `<div class="h-[69.750px] border-b border-[#07083f] px-[8px] pt-[7px] text-[10.500px] leading-[19px] tracking-[0.100px] whitespace-nowrap text-[#6b6b9d]">${a}<br>${b}<div class="flex justify-between leading-[16px] text-[#46467b]"><span>MarketWatch</span><span>12:38 PM ET</span></div></div>`).join('');

// Index charts
$('#indices').innerHTML = [
  ['DJIA','AAPL','161.84','-65.32 (-1.17%)',0,535,"537,568 546,530 552,610 560,690 565,728 572,728 575,685 580,740 586,800 595,857 604,790 608,690 614,645 619,690 623,703 628,683 633,720 637,730 641,698 645,715 650,770 655,830 659,832 664,885 670,820 674,785 678,785 684,720 690,645 694,645 699,585 705,640 709,700 714,690 720,690 724,698 730,645 733,683 738,605 744,562 750,580 757,608 767,608 772,660 778,702 788,702 793,645 799,640 803,600 808,543 815,585 820,560 825,540 829,560 833,540"],
  ['NASDAQ','NFLX','602.12','-14.32 (-0.11%)',0,871,"873,568 882,515 892,610 901,658 907,655 911,625 917,680 929,710 941,680 946,620 952,600 958,640 965,630 971,655 976,640 983,690 988,700 998,698 1007,655 1016,698 1022,630 1028,600 1035,558 1041,620 1047,640 1054,628 1061,640 1066,600 1070,625 1076,560 1081,540 1090,565 1102,575 1111,635 1123,640 1130,600 1134,600 1140,555 1145,520 1151,553 1160,528 1164,540 1168,520"],
  ['S&amp;P 500','AAPL','11,154.03','+2.32 (+0.11%)',1,1206,"1207,540 1212,562 1217,540 1224,575 1231,542 1238,630 1243,645 1250,700 1261,700 1267,660 1272,610 1280,610 1295,560 1301,600 1306,680 1309,650 1315,695 1321,680 1328,700 1334,640 1340,588 1346,645 1351,650 1356,700 1360,780 1366,790 1375,885 1382,835 1388,810 1393,730 1398,700 1403,725 1409,680 1415,700 1420,685 1424,645 1430,680 1435,770 1445,857 1454,790 1459,720 1464,685 1470,730 1477,730 1482,680 1488,600 1494,530 1502,570"],
].map(([a,b,c,d,up,x0,pts]) => {
  const P = pts.split(' ').map(p => p.split(',').map(Number)).map(([x,y]) => [((x-x0)*.67528).toFixed(1), ((y-500)*.29865).toFixed(1)]);
  const line = P.map(p => p.join(',')).join(' '), cut = P.filter(p => +p[0] <= 18);
  return `<div class="w-[201px]"><div class="flex h-[42px] bg-[#131449] pt-[3px] pr-[9px] pl-[5px]"><i class="mt-[2px] mr-[9px] h-[34px] w-[1.500px] bg-[#75697d]"></i>${quote(a,b,c,d,up)}</div>
    <svg class="mt-[17px] h-[188px] w-[201px]" viewBox="0 0 201 188"><polygon points="${line} 200.500,167.500 1,167.500" fill="url(#gIdx)"/><rect x="1" y="20" width="21" height="147" fill="#0a0b43" fill-opacity=".3"/>
    ${[5.5,45.7,86,126.3,167.5].map(y => `<path d="M0 ${y}H200.500" stroke="#2a2659" stroke-opacity=".8"/>`).join('')}
    <polyline points="${line}" fill="none" stroke="#f0cd8c" stroke-width="1.600" stroke-linejoin="round"/><polyline points="${cut.map(p => p.join(',')).join(' ')}" fill="none" stroke="#85809a" stroke-width="1.700"/>
    <g font-size="9" fill="#4b4b80" text-anchor="middle"><text x="71" y="181">11A</text><text x="126" y="181">1P</text><text x="181" y="181">3P</text><text x="42" y="157" fill="#241f55">MON</text></g></svg></div>`;
}).join('');
</script>
</body>
</html>
